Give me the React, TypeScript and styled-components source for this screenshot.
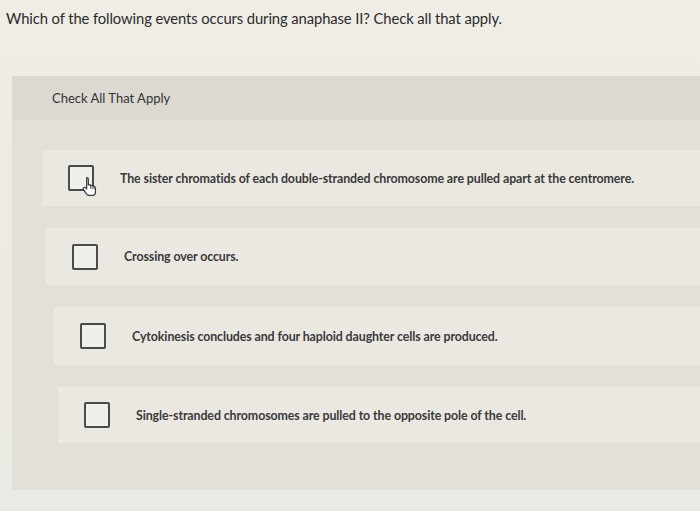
import React from "react";
import styled, { createGlobalStyle } from "styled-components";

const Global = createGlobalStyle`
  html, body { margin: 0; padding: 0; }
  body {
    background: #eeebe5;
    font-family: Lato, "Open Sans", sans-serif;
    color: #2e2e2e;
    width: 700px;
    height: 511px;
    overflow: hidden;
  }
`;

const Page = styled.div`
  display: flex;
  flex-direction: column;
  height: 511px;
  background: linear-gradient(180deg, #f0ede7 0%, #edeae4 60%, #ebe9e3 100%);
`;

const Question = styled.h1`
  margin: 0;
  padding: 9px 0 0 6px;
  height: 76px;
  flex: none;
  box-sizing: border-box;
  font-size: 14.8px;
  font-weight: 400;
  line-height: 18px;
  color: #2b2b2b;
  letter-spacing: -0.1px;
`;

const Panel = styled.section`
  margin-left: 12px;
  height: 414px;
  flex: none;
  display: flex;
  flex-direction: column;
  background: #e3e0da;
`;

const PanelHeader = styled.div`
  height: 44px;
  display: flex;
  align-items: center;
  padding-left: 40px;
  background: #dcd9d3;
  font-size: 13px;
  color: #333;
`;

const List = styled.div`
  display: flex;
  flex-direction: column;
  gap: 22px;
  padding-top: 30px;
`;

const Card = styled.label<{ $indent: number; $h: number }>`
  position: relative;
  display: flex;
  align-items: center;
  height: ${(p) => p.$h}px;
  margin-left: ${(p) => p.$indent}px;
  padding-left: 26px;
  background: #ebe8e2;
  gap: 26px;
`;

const Box = styled.span`
  position: relative;
  flex: none;
  width: 22px;
  height: 22px;
  border: 2px solid #4a4a4a;
  border-radius: 2px;
  background: #f1efea;
`;

const Cursor = styled.svg`
  position: absolute;
  left: 11px;
  top: 9px;
`;

const Text = styled.span`
  font-size: 12.4px;
  font-weight: 700;
  color: #3a3a3a;
  letter-spacing: -0.1px;
`;

const items = [
  { t: "The sister chromatids of each double-stranded chromosome are pulled apart at the centromere.", indent: 30, h: 56, cursor: true },
  { t: "Crossing over occurs.", indent: 34, h: 57, cursor: false },
  { t: "Cytokinesis concludes and four haploid daughter cells are produced.", indent: 42, h: 58, cursor: false },
  { t: "Single-stranded chromosomes are pulled to the opposite pole of the cell.", indent: 46, h: 56, cursor: false },
];

export default function App() {
  return (
    <Page>
      <Global />
      <Question>Which of the following events occurs during anaphase II? Check all that apply.</Question>
      <Panel>
        <PanelHeader>Check All That Apply</PanelHeader>
        <List>
          {items.map((it) => (
            <Card key={it.t} $indent={it.indent} $h={it.h}>
              <Box>
                {it.cursor && (
                  <Cursor width="18" height="20" viewBox="0 0 16 18">
                    <path
                      d="M5 1.5c.8 0 1.5.6 1.5 1.4V8l.3-.1c.8-.3 1.6.1 1.9.8.7-.4 1.6-.2 2 .5.7-.3 1.6 0 1.9.8.3.6.3 1.2.3 2v2.3c0 2-1.5 3.2-3.4 3.2H7.4c-1 0-1.8-.4-2.4-1.2L2.2 12.3c-.5-.6-.4-1.4.2-1.8.6-.4 1.3-.3 1.8.2l.8.9V2.9C5 2.1 5 1.5 5 1.5z"
                      fill="#fff"
                      stroke="#3a3a3a"
                      strokeWidth="1.1"
                      strokeLinejoin="round"
                    />
                    <path d="M8.7 8.7v3M10.7 9.3v2.6M12.6 10.1v2" stroke="#3a3a3a" strokeWidth="0.9" />
                  </Cursor>
                )}
              </Box>
              <Text>{it.t}</Text>
            </Card>
          ))}
        </List>
      </Panel>
    </Page>
  );
}
